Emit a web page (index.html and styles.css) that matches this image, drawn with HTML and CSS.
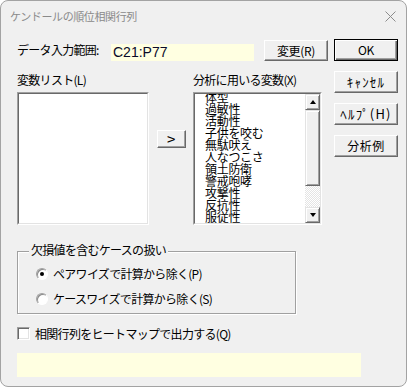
FILE: index.html
```html
<!DOCTYPE html>
<html lang="ja">
<head>
<meta charset="utf-8">
<title>ケンドールの順位相関行列</title>
<link rel="stylesheet" href="styles.css">
</head>
<body>
<div class="window">
  <div class="titlebar">
    <span class="title">ケンドールの順位相関行列</span>
    <svg class="close" width="11" height="11" viewBox="0 0 11 11"><path d="M0.5 0.5L10.5 10.5M10.5 0.5L0.5 10.5" stroke="#8c8c8c" stroke-width="1" fill="none"/></svg>
  </div>
  <div class="content">
    <div class="top">
      <div class="main">
        <div class="range-row">
          <span class="range-label">データ入力範囲:</span>
          <div class="range-field">C21:P77</div>
          <button class="btn change">変更(R)</button>
        </div>
        <div class="lists">
          <div class="lbl">変数リスト(L)</div>
          <div></div>
          <div class="lbl">分析に用いる変数(X)</div>
          <div class="listbox"><div class="listbox-inner"></div></div>
          <button class="btn move">&gt;</button>
          <div class="listbox"><div class="listbox-inner scrolled">
            <div class="items">
              <div class="items-inner">
                <div class="item">体型</div>
                <div class="item">過敏性</div>
                <div class="item">活動性</div>
                <div class="item">子供を咬む</div>
                <div class="item">無駄吠え</div>
                <div class="item">人なつこさ</div>
                <div class="item">領土防衛</div>
                <div class="item">警戒咆哮</div>
                <div class="item">攻撃性</div>
                <div class="item">反抗性</div>
                <div class="item">服従性</div>
              </div>
            </div>
            <div class="scrollbar">
              <div class="sb-btn"><span class="arrow up"></span></div>
              <div class="sb-thumb"></div>
              <div class="sb-track"></div>
              <div class="sb-btn"><span class="arrow down"></span></div>
            </div>
          </div></div>
        </div>
      </div>
      <div class="buttons">
        <button class="btn default">OK</button>
        <button class="btn kana">ｷｬﾝｾﾙ</button>
        <button class="btn kana">ﾍﾙﾌﾟ(H)</button>
        <button class="btn wide">分析例</button>
      </div>
    </div>
    <div class="group">
      <div class="legend">欠損値を含むケースの扱い</div>
      <div class="radio-row first"><span class="radio checked"></span><span class="rtext">ペアワイズで計算から除く(P)</span></div>
      <div class="radio-row"><span class="radio"></span><span class="rtext">ケースワイズで計算から除く(S)</span></div>
    </div>
    <div class="check-row"><span class="checkbox"></span><span class="rtext">相関行列をヒートマップで出力する(Q)</span></div>
    <div class="status"></div>
  </div>
</div>
</body>
</html>
```

FILE: styles.css
```css
html, body {
  margin: 0;
  padding: 0;
  background: #ffffff;
}
body {
  font-family: "Noto Sans CJK JP", sans-serif;
  font-size: 12px;
  color: #000;
}
.window {
  width: 407px;
  height: 387px;
  box-sizing: border-box;
  border: 1px solid #a3a3a3;
  border-radius: 8px;
  background: #f0f0f0;
  overflow: hidden;
}
.titlebar {
  height: 29px;
  display: flex;
  align-items: center;
  padding: 0 10px 0 9px;
}
.title {
  font-size: 11px;
  line-height: 14px;
  color: #8a8a8a;
  letter-spacing: -0.4px;
}
.close {
  margin-left: auto;
  margin-top: 1px;
}
.content {
  padding: 9px 0 0 16px;
}
.top {
  display: flex;
  gap: 6px;
}
.main {
  width: 311px;
}
.range-row {
  display: flex;
  align-items: flex-start;
  height: 22px;
}
.range-label {
  width: 94px;
  line-height: 22px;
  letter-spacing: -0.7px;
  white-space: nowrap;
}
.range-field {
  margin-top: 5px;
  width: 143px;
  height: 17px;
  box-sizing: border-box;
  padding-left: 2px;
  background: #ffffe1;
  color: #0a0a28;
  font-family: "Liberation Sans", Arial, sans-serif;
  font-size: 14px;
  line-height: 17px;
}
.btn {
  font-family: "Noto Sans CJK JP", sans-serif;
  font-size: 12px;
  color: #000;
  letter-spacing: -0.3px;
  padding: 0;
  margin: 0;
  height: 22px;
  width: 64px;
  box-sizing: border-box;
  background: #f0f0f0;
  border: 1px solid;
  border-color: #ffffff #696969 #696969 #ffffff;
  box-shadow: inset -1px -1px #a0a0a0;
  line-height: 18px;
}
.btn.default {
  border: 1px solid #000;
  box-shadow: inset 1px 1px #fff, inset -1px -1px #696969, inset -2px -2px #a0a0a0;
}
.btn.kana {
  font-size: 13px;
  letter-spacing: 1.2px;
}
.btn.wide {
  letter-spacing: 0.5px;
}
.change {
  margin-left: auto;
  margin-top: 1px;
  height: 21px;
}
.lists {
  display: grid;
  grid-template-columns: 132px 44px 129px;
  grid-template-rows: 14px 133px;
  row-gap: 5px;
  margin-top: 12px;
}
.lbl {
  line-height: 14px;
  letter-spacing: -0.7px;
  white-space: nowrap;
}
.listbox {
  box-sizing: border-box;
  border: 1px solid;
  border-color: #a0a0a0 #ffffff #ffffff #a0a0a0;
}
.listbox-inner {
  box-sizing: border-box;
  height: 100%;
  border: 1px solid;
  border-color: #696969 #e3e3e3 #e3e3e3 #696969;
  background: #fff;
}
.listbox-inner.scrolled {
  display: flex;
}
.items {
  flex: 1;
  overflow: hidden;
  padding-left: 10px;
}
.items-inner {
  margin-top: -3px;
}
.item {
  height: 12px;
  line-height: 12px;
  white-space: nowrap;
  letter-spacing: -0.3px;
}
.scrollbar {
  width: 15px;
  display: flex;
  flex-direction: column;
}
.sb-btn, .sb-thumb {
  box-sizing: border-box;
  background: #f0f0f0;
  border: 1px solid;
  border-color: #e3e3e3 #696969 #696969 #e3e3e3;
  box-shadow: inset 1px 1px #fff, inset -1px -1px #a0a0a0;
}
.sb-btn {
  height: 16px;
  display: flex;
  align-items: center;
  justify-content: center;
}
.sb-thumb {
  height: 76px;
}
.sb-track {
  flex: 1;
  background-color: #f4f4f4;
  background-image: repeating-conic-gradient(#ffffff 0 25%, #e4e4e4 0 50%);
  background-size: 2px 2px;
}
.arrow {
  width: 0;
  height: 0;
  border-left: 3.5px solid transparent;
  border-right: 3.5px solid transparent;
}
.arrow.up {
  border-bottom: 4px solid #000;
}
.arrow.down {
  border-top: 4px solid #000;
}
.move {
  justify-self: center;
  align-self: start;
  margin-top: 38px;
  width: 29px;
  height: 18px;
  font-size: 15px;
  line-height: 14px;
}
.buttons {
  display: flex;
  flex-direction: column;
  gap: 10px;
  width: 64px;
}
.group {
  margin-top: 26px;
  width: 279px;
  box-sizing: border-box;
  border: 1px solid #a0a0a0;
  box-shadow: inset 1px 1px #fff, 1px 1px #fff;
  padding-bottom: 7px;
}
.legend {
  width: fit-content;
  margin: -9px 0 0 11px;
  padding: 0 2px;
  background: #f0f0f0;
  line-height: 14px;
  letter-spacing: -0.7px;
  white-space: nowrap;
}
.radio-row {
  display: flex;
  align-items: center;
  height: 14px;
  padding-left: 18px;
  margin-top: 11px;
}
.radio-row.first {
  margin-top: 10px;
}
.rtext {
  margin-left: 5px;
  line-height: 14px;
  letter-spacing: -0.7px;
  white-space: nowrap;
}
.radio {
  width: 12px;
  height: 12px;
  box-sizing: border-box;
  border-radius: 50%;
  border: 1px solid;
  border-color: #a0a0a0 #ffffff #ffffff #a0a0a0;
  background: #fff;
  box-shadow: inset 1px 1px #8a8a8a;
  display: flex;
  align-items: center;
  justify-content: center;
}
.radio.checked::after {
  content: "";
  width: 4px;
  height: 4px;
  border-radius: 50%;
  background: #000;
}
.check-row {
  display: flex;
  align-items: center;
  height: 13px;
  margin-top: 13px;
}
.checkbox {
  width: 13px;
  height: 13px;
  box-sizing: border-box;
  border: 1px solid;
  border-color: #a0a0a0 #ffffff #ffffff #a0a0a0;
  box-shadow: inset 1px 1px #696969, inset -1px -1px #e3e3e3;
  background: #fff;
}
.status {
  margin-top: 13px;
  width: 344px;
  height: 24px;
  background: #ffffe1;
}
```
